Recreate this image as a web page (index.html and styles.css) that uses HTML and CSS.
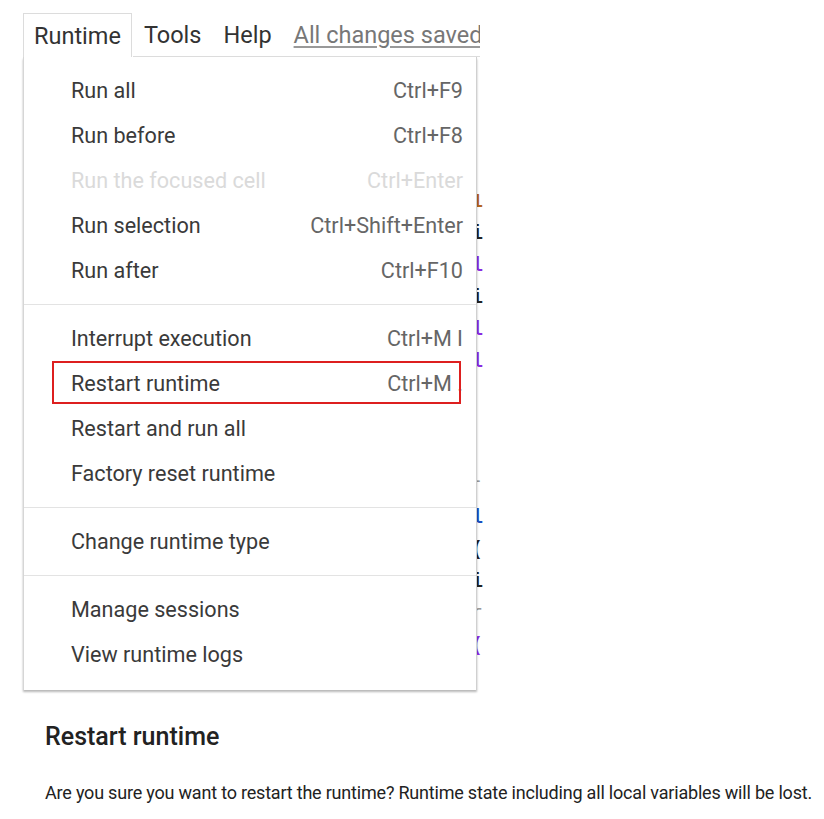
FILE: index.html
```html
<!DOCTYPE html>
<html>
<head>
<meta charset="utf-8">
<link rel="stylesheet" href="styles.css">
</head>
<body>
<div class="page">
  <div class="notebook">
    <div class="code-behind">
      <span class="c-or" style="top:190px">1</span>
      <span class="c-bk" style="top:222px">i</span>
      <span class="c-pu" style="top:254px">l</span>
      <span class="c-bk" style="top:286px">i</span>
      <span class="c-pu" style="top:318px">l</span>
      <span class="c-pu" style="top:350px">l</span>
      <span class="c-gr" style="top:470px">-</span>
      <span class="c-bl" style="top:506px">l</span>
      <span class="c-bk" style="top:538px">(</span>
      <span class="c-bk" style="top:570px">i</span>
      <span class="c-gr" style="top:602px">r</span>
      <span class="c-pu" style="top:634px">(</span>
    </div>
    <div class="menubar">
      <span class="tab active">Runtime</span>
      <span class="tab">Tools</span>
      <span class="tab">Help</span>
      <span class="saved">All changes saved</span>
    </div>
    <div class="dropdown">
      <div class="group">
        <div class="item"><span>Run all</span><span class="key">Ctrl+F9</span></div>
        <div class="item"><span>Run before</span><span class="key">Ctrl+F8</span></div>
        <div class="item disabled"><span>Run the focused cell</span><span class="key">Ctrl+Enter</span></div>
        <div class="item"><span>Run selection</span><span class="key">Ctrl+Shift+Enter</span></div>
        <div class="item"><span>Run after</span><span class="key">Ctrl+F10</span></div>
      </div>
      <div class="group">
        <div class="item"><span>Interrupt execution</span><span class="key">Ctrl+M I</span></div>
        <div class="item highlighted"><span>Restart runtime</span><span class="key">Ctrl+M .</span></div>
        <div class="item"><span>Restart and run all</span></div>
        <div class="item"><span>Factory reset runtime</span></div>
      </div>
      <div class="group">
        <div class="item"><span>Change runtime type</span></div>
      </div>
      <div class="group">
        <div class="item"><span>Manage sessions</span></div>
        <div class="item"><span>View runtime logs</span></div>
      </div>
    </div>
  </div>
  <div class="dialog">
    <h2 class="title">Restart runtime</h2>
    <p class="msg">Are you sure you want to restart the runtime? Runtime state including all local variables will be lost.</p>
  </div>
</div>
</body>
</html>
```
FILE: styles.css
```css
* { box-sizing: border-box; }
html, body { margin: 0; padding: 0; background: #fff; }
body { font-family: Roboto, "Liberation Sans", sans-serif; color: #333; }
.page { width: 824px; height: 819px; position: relative; }
.notebook { position: relative; padding: 13px 0 0 23px; width: 480px; }
.code-behind { position: absolute; left: 471px; top: 0; width: 12px; height: 700px; overflow: hidden; font-family: "Liberation Mono", monospace; font-size: 20px; font-weight: bold; }
.code-behind span { position: absolute; left: 0; line-height: 24px; }
.c-or { color: #b5651d; }
.c-bk { color: #222; }
.c-pu { color: #8a2be2; }
.c-gr { color: #999; font-weight: normal; }
.c-bl { color: #1a4fbf; }
.menubar { display: flex; align-items: stretch; height: 44px; width: 457px; overflow: hidden; white-space: nowrap; font-size: 23.5px; color: #333; }
.tab { padding: 0 11px; display: flex; align-items: center; border-bottom: 1px solid #dcdcdc; }
.tab.active { padding: 0 10px 0 10px; border: 1px solid #dcdcdc; border-bottom: none; background: #fff; margin-right: 1px; }
.saved { display: flex; align-items: center; padding-left: 11px; color: #777; text-decoration: underline; text-decoration-color: #999; text-underline-offset: 3px; border-bottom: 1px solid #dcdcdc; flex: 1; }
.dropdown { position: relative; z-index: 2; width: 454px; background: #fff; border-left: 1px solid #d6d6d6; border-right: 1px solid #d0d0d0; box-shadow: 0 2px 2px rgba(0,0,0,0.28); }
.group { padding: 11px 0; border-top: 1px solid #e3e3e3; }
.group:first-child { border-top: none; }
.group:last-child { padding-bottom: 13px; }
.item { height: 45px; display: flex; align-items: center; justify-content: space-between; padding: 0 13px 0 47px; font-size: 21.6px; color: #3a3a3a; }
.item .key { color: #666; }
.item.disabled, .item.disabled .key { color: #dadada; }
.item.highlighted { position: relative; }
.item.highlighted::after { content: ""; position: absolute; left: 28px; right: 15px; top: 0; bottom: 2px; border: 2px solid #dd1f1f; }
.dialog { padding: 0 0 0 45px; margin-top: 32px; }
.title { margin: 0; font-size: 25px; font-weight: 500; color: #222; line-height: 30px; }
.msg { margin: 30px 0 0; font-size: 18px; color: #222; line-height: 22px; letter-spacing: -0.2px; }
```
